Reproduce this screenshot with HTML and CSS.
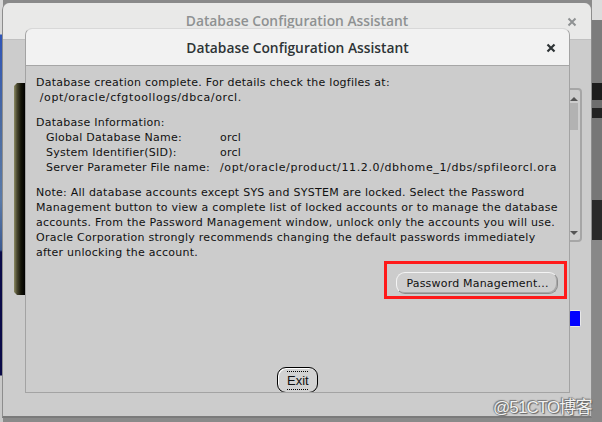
FILE: index.html
```html
<!DOCTYPE html>
<html>
<head>
<meta charset="utf-8">
<link rel="stylesheet" href="styles.css">
</head>
<body>
<div class="desktop">
  <div class="strip-left"></div>
  <div class="strip-right"></div>

  <div class="win back">
    <div class="back-title">
      <span class="back-title-text">Database Configuration Assistant</span>
      <svg class="back-close" width="10" height="10" viewBox="0 0 10 10"><path d="M1.5 1.5 L8.5 8.5 M8.5 1.5 L1.5 8.5" stroke="#8f9293" stroke-width="2"/></svg>
    </div>
    <div class="back-body">
      <div class="dark-panel"></div>
      <div class="back-right">
        <div class="scrollbar">
          <svg class="arrow-up" width="10" height="6" viewBox="0 0 10 6"><path d="M1 5 L5 1 L9 5 Z" fill="#555"/></svg>
          <div class="thumb"></div>
          <svg class="arrow-down" width="10" height="6" viewBox="0 0 10 6"><path d="M1 1 L5 5 L9 1 Z" fill="#555"/></svg>
        </div>
        <div class="blue-box"></div>
      </div>
    </div>
  </div>

  <div class="win front">
    <div class="front-title">
      <span class="front-title-text">Database Configuration Assistant</span>
      <svg class="front-close" width="10" height="10" viewBox="0 0 10 10"><path d="M1.5 1.5 L8.5 8.5 M8.5 1.5 L1.5 8.5" stroke="#2e3436" stroke-width="2.2"/></svg>
    </div>
    <div class="front-body">
      <p class="para">Database creation complete. For details check the logfiles at:<br>&nbsp;<span class="path">/opt/oracle/cfgtoollogs/dbca/orcl.</span></p>
      <div class="para">
        <div>Database Information:</div>
        <div class="info">
          <span>Global Database Name:</span><span>orcl</span>
          <span>System Identifier(SID):</span><span>orcl</span>
          <span>Server Parameter File name:</span><span class="path">/opt/oracle/product/11.2.0/dbhome_1/dbs/spfileorcl.ora</span>
        </div>
      </div>
      <p class="para note">Note: All database accounts except SYS and SYSTEM are locked. Select the Password<br>Management button to view a complete list of locked accounts or to manage the database<br>accounts. From the Password Management window, unlock only the accounts you will use.<br>Oracle Corporation strongly recommends changing the default passwords immediately<br>after unlocking the account.</p>
      <div class="btn-row">
        <div class="red-mark">
          <button class="pw-btn">Password Management...</button>
        </div>
      </div>
      <div class="exit-row">
        <button class="exit-btn"><span class="exit-label">Exit</span></button>
      </div>
    </div>
  </div>

  <div class="watermark">@51CTO博客</div>
</div>
</body>
</html>
```

FILE: styles.css
```css
* { box-sizing: border-box; }
html, body { margin: 0; padding: 0; }
body { background: #8a8a8a; width: 602px; height: 422px; overflow: hidden; }

.desktop { position: relative; width: 602px; height: 422px; background: #8a8a8a; overflow: hidden; }

.strip-left {
  position: absolute; left: 0; top: 0; width: 3px; height: 422px;
  background: linear-gradient(to bottom, #d8d8d8 0, #d8d8d8 34px, #2f55b8 35px, #4a6aa0 120px, #5a7aa8 200px, #3c5a90 250px, #0a0a48 252px, #0a0a48 375px, #c8c8c8 376px);
}
.strip-right {
  position: absolute; left: 592px; top: 0; width: 10px; height: 422px;
  background:
    linear-gradient(to bottom, #dcdcdc 0, #dcdcdc 20px, #7c7c7c 20px, #7c7c7c 83px, #1c1c1c 83px, #1c1c1c 100px, #6e6e6e 100px, #6e6e6e 108px, #222 108px, #222 118px, #777 118px, #777 200px, #2a2a2a 200px, #2a2a2a 240px, #888 240px);
}

.win { position: absolute; }

/* back window */
.back {
  left: 2px; top: 3px; width: 590px; height: 415px;
  border-left: 1px solid #8d8d8d; border-right: 1px solid #8d8d8d; border-bottom: 2px solid #7a7a7a;
  border-radius: 7px 7px 0 0;
  background: #cccccc;
  display: flex; flex-direction: column;
}
.back-title {
  height: 37px; flex: none;
  background: #e9e9e8;
  border-radius: 7px 7px 0 0;
  border-bottom: 1px solid #c0c0c0;
  display: flex; align-items: center; justify-content: center; position: relative;
}
.back-title-text {
  font-family: "Open Sans", "DejaVu Sans", sans-serif; font-weight: 600; font-size: 13.8px;
  color: #8e9192; margin-left: 0px; margin-top: -1px;
}
.back-close { position: absolute; right: 14px; top: 14px; }

.back-body { flex: 1; display: flex; justify-content: space-between; }
.dark-panel {
  margin-top: 43px; margin-left: 11px; width: 20px; height: 212px;
  background: linear-gradient(to right, #8c8a62 0, #4a4830 3px, #141408 7px, #000 11px);
  clip-path: polygon(3px 0, 100% 0, 100% 100%, 3px 100%, 0 calc(100% - 3px), 0 3px);
}
.back-right { margin-right: 9px; padding-top: 48px; display: flex; flex-direction: column; align-items: flex-end; }
.scrollbar {
  position: relative; width: 30px; height: 154px;
  border: 2px solid #a6a6a6; border-radius: 4px;
  background: #cdcdcd;
}
.arrow-up { position: absolute; right: 1px; top: 6px; }
.arrow-down { position: absolute; right: 1px; bottom: 4px; }
.thumb { position: absolute; right: 2px; top: 13px; width: 10px; height: 27px; background: #b2b2b2; }
.blue-box {
  margin-top: 68px; margin-right: 1px; width: 12px; height: 17px;
  background: #0000ff; border: 1px solid #e8e8e8; border-left-color: #9c9c9c; border-radius: 2px;
}

/* front dialog */
.front {
  left: 25px; top: 28px; width: 545px; height: 365px;
  border: 1px solid #a3a3a3; border-top-color: #d8d8d8;
  border-radius: 7px 7px 0 0;
  background: #cccccc;
  display: flex; flex-direction: column; overflow: hidden;
}
.front-title {
  height: 37px; flex: none; background: #f2f2f2;
  border-bottom: 1px solid #a6a6a6;
  display: flex; align-items: center; justify-content: center; position: relative;
}
.front-title-text {
  font-family: "Open Sans", "DejaVu Sans", sans-serif; font-weight: 600; font-size: 13.8px;
  color: #2e3436; margin-top: 0px;
}
.front-close { position: absolute; right: 13px; top: 14px; }

.front-body {
  flex: 1; display: flex; flex-direction: column;
  padding: 9px 0 0 10px;
  font-family: "DejaVu Sans", sans-serif; font-size: 11px; line-height: 15px; color: #111;
  letter-spacing: 0.25px;
}
.path { letter-spacing: 0.62px; }
.para { margin: 0 0 10px 0; }
.info { display: grid; grid-template-columns: 174px auto; padding-left: 10px; }
.note { margin-bottom: 1px; }

.btn-row { display: flex; justify-content: flex-end; padding-right: 2px; }
.red-mark { border: 3px solid #ff1a1a; padding: 8px 6px 2px 9px; }
.pw-btn {
  width: 162px; height: 22px; margin: 0; padding: 0 0 0 1px;
  font-family: "DejaVu Sans", sans-serif; font-size: 11px; color: #111; letter-spacing: 0.2px;
  background: #cecece;
  border: 1px solid #8c8c8c; border-top-color: #f4f4f4; border-left-color: #f4f4f4;
  border-radius: 9px;
  box-shadow: inset -1px -1px 0 #a8a8a8;
}
.exit-row { margin-top: auto; display: flex; justify-content: center; padding-right: 10px; }
.exit-btn {
  width: 41px; height: 26px; margin: 0 0 -1px 0; padding: 0;
  background: #d2d2d2; border: 1.5px solid #000; border-radius: 9px;
  box-shadow: inset 1px 1px 0 #fff;
  display: flex; align-items: center; justify-content: center;
}
.exit-label {
  font-family: "Liberation Sans", sans-serif; font-size: 13px; color: #111;
  border-top: 1px dotted #000; border-bottom: 1px dotted #000;
  padding: 1px 0 0; line-height: 16px; width: 21px; text-align: center;
}

.watermark {
  position: absolute; left: 493px; top: 393px;
  font-family: "Liberation Sans", "Noto Sans CJK SC", sans-serif; font-size: 17px;
  color: #f2f2f2;
  text-shadow: 0 0 1px #555, 1px 1px 1px #666, -1px -1px 1px #777;
  letter-spacing: -0.9px;
}
```
